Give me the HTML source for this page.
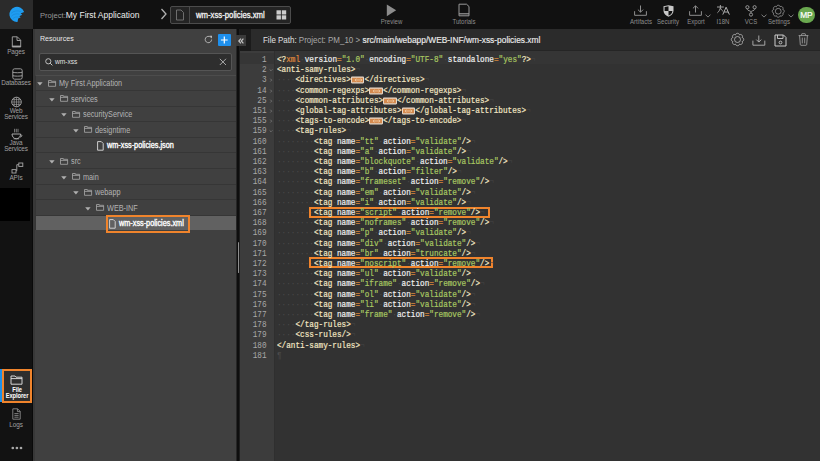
<!DOCTYPE html>
<html><head><meta charset="utf-8">
<style>
*{margin:0;padding:0;box-sizing:border-box}
html,body{width:820px;height:461px;overflow:hidden;background:#111;font-family:"Liberation Sans",sans-serif}
.a{position:absolute}
#top{left:0;top:0;width:820px;height:29px;background:#111}
#logo{left:0;top:0;width:33px;height:29px;background:#2b2b2b}
#side{left:0;top:29px;width:32px;height:432px;background:#121212}
#sideb{left:31.6px;top:29px;width:3px;height:432px;background:#383838;border-left:0.6px solid #0a0a0a}
#res{left:34.5px;top:29px;width:201.5px;height:432px;background:#404040}
#div{left:236px;top:29px;width:4px;height:432px;background:#0e0e0e;border-left:0.8px solid #262626;border-right:0.8px solid #1e1e1e}
#edh{left:251px;top:29px;width:569px;height:22px;background:#2b2b2b;border-bottom:0.8px solid #252525}
#edhd{left:240px;top:29px;width:11px;height:22px;background:#1b1b1b}
#gut{left:240px;top:51px;width:34px;height:410px;background:#3c3c3c}
#code{left:274px;top:51px;width:546px;height:410px;background:#323232;border-left:1px solid #2f2f2f}
.lbl{color:#8e8e8e;font-size:6.5px;text-align:center;white-space:nowrap;transform:scaleX(.93)}
.sl{color:#a0a0a0;font-size:6.4px;text-align:center;line-height:6px;width:32px;left:0;letter-spacing:-0.1px}
.row{left:34px;width:202px;height:15.6px;border-top:1px solid #333}
.tt{font-size:8.4px;color:#b4b4b4;white-space:nowrap;transform:scaleX(.87);transform-origin:0 50%}
.ln{position:absolute;left:240px;width:26.5px;text-align:right;font-family:"Liberation Mono",monospace;font-size:7.7px;color:#a8a8a8;line-height:10.2px;transform:scaleY(1.15)}
.cl{position:absolute;left:277px;font-family:"Liberation Mono",monospace;font-size:7.7px;color:#e6dcc0;line-height:10.2px;white-space:pre;-webkit-text-stroke:0.18px currentColor;transform:scaleY(1.15)}
.t{color:#f2e6c4}
.n{color:#f0f0f0}
.e{color:#d8893a}
.s{color:#a8c862}
.x{color:#e08a3c}
.d{color:#4a4a4a;-webkit-text-stroke:0}
.eol{color:#444;-webkit-text-stroke:0}
.fw{position:absolute;left:268.5px;width:4px;height:10.2px}
.fold{display:inline-block;width:13.4px;height:5.7px;background:#d48a4e;border:0.8px solid #e8d8c8;border-radius:1px;vertical-align:-0.6px;margin:0 0.2px;position:relative}.fold svg{position:absolute;left:1.5px;top:-0.3px}
</style></head><body>
<div id="top" class="a"></div>
<div id="logo" class="a"></div>
<div id="side" class="a"></div>
<div id="sideb" class="a"></div>
<div id="res" class="a"></div>
<div id="div" class="a"></div>
<div id="edhd" class="a"></div>
<div id="edh" class="a"></div>
<div id="gut" class="a"></div>
<div id="code" class="a"></div>

<!-- top bar text -->
<div class="a" style="left:40px;top:9.5px;font-size:7.6px;color:#999;white-space:nowrap">Project:<span style="font-size:8.5px;color:#eee">My First Application</span></div>


<!-- logo -->
<svg class="a" style="left:0;top:0" width="33" height="29" viewBox="0 0 33 29">
<path d="M17.5 21.9 A7.55 7.55 0 1 1 24.1 11.9 L20.6 13.5 L22.3 14.7 L19.3 16.2 L20.7 17.3 L18.2 18.6 Z" fill="#1e9cf0"/>
<path d="M11.2 13.2 C13.5 10.8 17.5 10.2 21.2 11.6 M11.3 16.4 C13.3 14 16.5 13.2 19.6 14.3 M12.6 19 C14.2 17.2 16.2 16.6 18.6 17.2" stroke="#1a84d2" stroke-width="0.6" fill="none"/>
</svg>
<!-- chevron -->
<svg class="a" style="left:160px;top:8px" width="8" height="12" viewBox="0 0 8 12"><path d="M1.5 1 L6 6 L1.5 11" stroke="#b0b0b0" stroke-width="1.3" fill="none"/></svg>
<!-- tab -->
<div class="a" style="left:170px;top:6px;width:121px;height:18px;border:1px solid #4c4c4c;border-radius:2px;background:#242424"></div>
<div class="a" style="left:189px;top:7px;width:1px;height:16px;background:#4a4a4a"></div>
<svg class="a" style="left:175px;top:9px" width="10" height="12" viewBox="0 0 10 12"><path d="M1.5 1 H6 L8.5 3.5 V11 H1.5 Z" stroke="#777" stroke-width="0.9" fill="none"/></svg>
<div class="a" style="left:195.5px;top:9.5px;font-size:8.6px;color:#f4f4f4;-webkit-text-stroke:0.3px #f4f4f4;white-space:nowrap;transform:scaleX(.9);transform-origin:0 50%">wm-xss-policies.xml</div>
<svg class="a" style="left:276px;top:10px" width="11" height="10" viewBox="0 0 11 10"><rect x="0.5" y="0.3" width="4.4" height="4.2" fill="#ccc"/><rect x="5.8" y="0.3" width="4.4" height="4.2" fill="#ccc"/><rect x="0.5" y="5.3" width="4.4" height="4.2" fill="#ccc"/><rect x="5.8" y="5.3" width="4.4" height="4.2" fill="#ccc"/></svg>
<!-- preview -->
<svg class="a" style="left:386px;top:4px" width="11" height="13" viewBox="0 0 11 13"><path d="M0.8 0.5 L10.2 6.3 L0.8 12.2 Z" fill="#8c8c8c"/></svg>
<div class="a lbl" style="left:371px;top:18px;width:41px">Preview</div>
<!-- tutorials -->
<svg class="a" style="left:458px;top:3px" width="12" height="14" viewBox="0 0 12 14"><path d="M1 1.2 H8.5 L11 3.5 V12.8 H1 Z" stroke="#999" stroke-width="1" fill="none"/><path d="M1 10.8 H11" stroke="#999" stroke-width="1.2"/></svg>
<div class="a lbl" style="left:444px;top:18px;width:40px">Tutorials</div>
<!-- artifacts -->
<svg class="a" style="left:634px;top:5px" width="13" height="11" viewBox="0 0 13 11"><path d="M6.5 0.5 V7.2 M3.9 4.6 L6.5 7.2 L9.1 4.6 M0.6 6.2 V10.3 H12.4 V6.2" stroke="#8e8e8e" stroke-width="1" fill="none"/></svg>
<div class="a lbl" style="left:624.5px;top:18px;width:32px">Artifacts</div>
<!-- security -->
<svg class="a" style="left:662.5px;top:4.8px" width="11" height="12" viewBox="0 0 11 12"><path d="M0.5 1.2 L5.5 0.3 L10.5 1.2 V5.8 C10.5 8.8 8 10.8 5.5 11.7 C3 10.8 0.5 8.8 0.5 5.8 Z" fill="#c8c8c8"/><path d="M1.6 2 L5.5 1.3 V6 H1.6 Z M5.5 6 H9.4 C9.2 8.4 7.6 10 5.5 10.6 Z" fill="#111"/></svg>
<div class="a lbl" style="left:653px;top:18px;width:30px">Security</div>
<!-- export -->
<svg class="a" style="left:689px;top:5px" width="13" height="11" viewBox="0 0 13 11"><path d="M6.5 7.5 V0.8 M3.9 3.4 L6.5 0.8 L9.1 3.4 M0.6 6.2 V10.3 H12.4 V6.2" stroke="#8e8e8e" stroke-width="1" fill="none"/></svg>
<svg class="a" style="left:704.5px;top:13.5px" width="6" height="4" viewBox="0 0 6 4"><path d="M0.5 0.6 L3 3.1 L5.5 0.6" stroke="#999" stroke-width="0.8" fill="none"/></svg>
<div class="a lbl" style="left:682.5px;top:18px;width:26px">Export</div>
<!-- i18n -->
<svg class="a" style="left:716px;top:4px" width="15" height="12" viewBox="0 0 15 12"><path d="M1 3 H7.8 M4.4 1 V3 C4.2 5.5 3 7.5 1.4 8.8 M4.4 4 C5 5.6 6 6.6 7.2 7.2" stroke="#b0b0b0" stroke-width="0.9" fill="none"/><path d="M6.8 10.6 L10.1 3.2 L13.4 10.6 M8.2 8 H12" stroke="#b0b0b0" stroke-width="1" fill="none"/></svg>
<div class="a lbl" style="left:713px;top:18px;width:20px">I18N</div>
<!-- vcs -->
<svg class="a" style="left:745px;top:4.5px" width="12" height="12" viewBox="0 0 12 12"><circle cx="2.4" cy="2.2" r="1.6" stroke="#a0a0a0" stroke-width="0.9" fill="none"/><circle cx="9.6" cy="2.2" r="1.6" stroke="#a0a0a0" stroke-width="0.9" fill="none"/><circle cx="6" cy="9.6" r="1.6" stroke="#a0a0a0" stroke-width="0.9" fill="none"/><path d="M2.4 3.8 V4.6 C2.4 5.6 6 5.8 6 6.8 V8 M9.6 3.8 V4.6 C9.6 5.6 6 5.8 6 6.8" stroke="#a0a0a0" stroke-width="0.9" fill="none"/></svg>
<svg class="a" style="left:760.5px;top:13.5px" width="6" height="4" viewBox="0 0 6 4"><path d="M0.5 0.6 L3 3.1 L5.5 0.6" stroke="#999" stroke-width="0.8" fill="none"/></svg>
<div class="a lbl" style="left:739.5px;top:18px;width:22px">VCS</div>
<!-- settings -->
<svg class="a" style="left:772.3px;top:4.6px;overflow:visible" width="12.5" height="12.5" viewBox="0 0 13 13"><path d="M11.12 4.59 C13.26 4.69 13.26 8.31 11.12 8.41 C12.56 10.00 10.00 12.56 8.41 11.12 C8.31 13.26 4.69 13.26 4.59 11.12 C3.00 12.56 0.44 10.00 1.88 8.41 C-0.26 8.31 -0.26 4.69 1.88 4.59 C0.44 3.00 3.00 0.44 4.59 1.88 C4.69 -0.26 8.31 -0.26 8.41 1.88 C10.00 0.44 12.56 3.00 11.12 4.59 Z" stroke="#a0a0a0" stroke-width="0.8" fill="none" stroke-linejoin="round"/><circle cx="6.5" cy="6.5" r="3" stroke="#a0a0a0" stroke-width="0.8" fill="none"/></svg>
<svg class="a" style="left:788px;top:13.5px" width="6" height="4" viewBox="0 0 6 4"><path d="M0.5 0.6 L3 3.1 L5.5 0.6" stroke="#999" stroke-width="0.8" fill="none"/></svg>
<div class="a lbl" style="left:763.5px;top:18px;width:30px">Settings</div>
<!-- avatar -->
<div class="a" style="left:798px;top:6.5px;width:16.5px;height:16.5px;border-radius:50%;background:#6aa84f;color:#fff;font-size:8.4px;line-height:16.5px;text-align:center;letter-spacing:-0.3px;-webkit-text-stroke:0.2px #fff">MP</div>

<!-- sidebar -->
<svg class="a" style="left:11px;top:36px" width="11" height="12" viewBox="0 0 11 12"><path d="M1.3 0.8 H6.3 L9.7 4.2 V11 H1.3 Z M6 0.8 V4.5 H9.7" stroke="#a8a8a8" stroke-width="0.9" fill="none" stroke-linejoin="round"/><path d="M1.3 10.3 H9.7" stroke="#a8a8a8" stroke-width="1.4"/></svg>
<div class="a sl" style="top:48.5px">Pages</div>
<svg class="a" style="left:11.5px;top:68px" width="11" height="12" viewBox="0 0 11 12"><rect x="0.8" y="0.8" width="9.4" height="10.4" rx="1.8" stroke="#a8a8a8" stroke-width="0.9" fill="none"/><path d="M0.8 4.3 C3 4.9 8 4.9 10.2 4.3 M0.8 7.7 C3 8.3 8 8.3 10.2 7.7" stroke="#a8a8a8" stroke-width="0.9" fill="none"/></svg>
<div class="a sl" style="top:80px">Databases</div>
<svg class="a" style="left:10.5px;top:95.5px" width="11" height="12" viewBox="0 0 11 12"><circle cx="5.5" cy="6" r="4.8" stroke="#a8a8a8" stroke-width="0.9" fill="none"/><path d="M0.8 6 H10.2 M5.5 1.2 V10.8 M1.5 3.6 H9.5 M1.5 8.4 H9.5 M3.2 1.8 V10.2 M7.8 1.8 V10.2" stroke="#a8a8a8" stroke-width="0.6" fill="none"/></svg>
<div class="a sl" style="top:108px">Web<br>Services</div>
<svg class="a" style="left:10.5px;top:127.5px" width="12" height="12" viewBox="0 0 12 12"><path d="M1 6 H9.6 C9.6 8.8 7.6 10.8 5.3 10.8 C3 10.8 1 8.8 1 6 Z M9.4 6.6 C11.4 6.6 11.4 9 9 9" stroke="#a8a8a8" stroke-width="1" fill="none"/><path d="M3.6 0.8 V4.4 M5.3 0.8 V4.4 M7 0.8 V4.4" stroke="#a8a8a8" stroke-width="0.7"/><path d="M2.5 10.8 H8.2" stroke="#a8a8a8" stroke-width="0.8"/></svg>
<div class="a sl" style="top:139.5px">Java<br>Services</div>
<svg class="a" style="left:10.5px;top:162px" width="13" height="12" viewBox="0 0 13 12"><rect x="1" y="7.6" width="4" height="3.4" stroke="#a8a8a8" stroke-width="0.9" fill="none"/><rect x="7.8" y="1" width="4" height="3.4" stroke="#a8a8a8" stroke-width="0.9" fill="none"/><path d="M5 8.8 H5.8 V2.7 H7.8" stroke="#a8a8a8" stroke-width="0.9" fill="none"/></svg>
<div class="a sl" style="top:174.5px">APIs</div>
<div class="a" style="left:0;top:187.5px;width:30px;height:33.5px;background:#000"></div>
<!-- file explorer -->
<div class="a" style="left:0;top:368.5px;width:2px;height:33px;background:#1e90e8"></div>
<div class="a" style="left:1.8px;top:368.6px;width:30.6px;height:34px;border:2px solid #f0842c;background:#2e2e2e"></div>
<svg class="a" style="left:10px;top:374.5px" width="13" height="10" viewBox="0 0 13 10"><path d="M1 1 H5 L6 2.2 H12 V9.2 H1 Z M1 3.6 H12" stroke="#e6e6e6" stroke-width="0.9" fill="none"/></svg>
<div class="a sl" style="top:386.5px;color:#fff;font-weight:bold;left:0.5px;transform:scaleX(.9)">File<br>Explorer</div>
<svg class="a" style="left:11.5px;top:407.5px" width="9" height="12" viewBox="0 0 9 12"><path d="M0.8 0.8 H5.6 L8.2 3.4 V11.2 H0.8 Z M5.4 0.8 V3.6 H8.2 M2.4 5.6 H6.6 M2.4 7.4 H6.6 M2.4 9.2 H6.6" stroke="#999" stroke-width="0.8" fill="none"/></svg>
<div class="a sl" style="top:421.5px">Logs</div>
<svg class="a" style="left:10.5px;top:445.5px" width="12" height="4" viewBox="0 0 12 4"><circle cx="1.8" cy="2" r="1.35" fill="#a8a8a8"/><circle cx="5.9" cy="2" r="1.35" fill="#a8a8a8"/><circle cx="10" cy="2" r="1.35" fill="#a8a8a8"/></svg>

<!-- resources header -->
<div class="a" style="left:40px;top:34px;font-size:8px;color:#e8e8e8;white-space:nowrap;transform:scaleX(.88);transform-origin:0 50%">Resources</div>
<svg class="a" style="left:204px;top:35px" width="9" height="9" viewBox="0 0 9 9"><path d="M7.6 4.5 A3.2 3.2 0 1 1 6.6 2.2" stroke="#bbb" stroke-width="0.9" fill="none"/><path d="M5.4 0.8 H8 V3.4 Z" fill="#bbb"/></svg>
<div class="a" style="left:218px;top:33.8px;width:12.6px;height:11.9px;background:#1e90ee;border-radius:1px"></div>
<svg class="a" style="left:218px;top:33.8px" width="12.6" height="12" viewBox="0 0 12.6 12"><path d="M6.3 2.6 V9.4 M2.9 6 H9.7" stroke="#fff" stroke-width="1.2"/></svg>
<div class="a" style="left:39px;top:53px;width:193px;height:18px;border:1px solid #555;border-radius:2px;background:#2e2e2e"></div>
<svg class="a" style="left:45px;top:58px" width="8" height="8" viewBox="0 0 8 8"><circle cx="3.3" cy="3.3" r="2.6" stroke="#ccc" stroke-width="0.9" fill="none"/><path d="M5.2 5.2 L7.4 7.4" stroke="#ccc" stroke-width="1"/></svg>
<div class="a" style="left:55px;top:56.8px;font-size:7.2px;color:#e0e0e0;white-space:nowrap;transform:scaleX(.92);transform-origin:0 50%">wm-xss</div>
<svg class="a" style="left:218.5px;top:58px" width="8" height="8" viewBox="0 0 8 8"><path d="M0.8 0.8 L7 7 M7 0.8 L0.8 7" stroke="#c8c8c8" stroke-width="0.8"/></svg>
<div class="a" style="left:34.5px;top:74.5px;width:201.5px;height:15.6px;background:#404040;border-top:1px solid #4c4c4c;border-left:0.8px solid #353535"></div>
<svg class="a" style="left:37.2px;top:82.1px" width="6" height="4" viewBox="0 0 6 4"><path d="M0.2 0.3 H5.6 L2.9 3.6 Z" fill="#b0b0b0"/></svg>
<svg class="a" style="left:48.0px;top:79.6px" width="9" height="7" viewBox="0 0 9 7"><path d="M0.5 0.5 H3.3 V1.3 H7.6 V6.3 H0.5 Z M0.5 2.4 H7.6" stroke="#aaa" stroke-width="0.8" fill="none"/></svg>
<div class="a tt" style="left:58.6px;top:78.1px">My First Application</div>
<div class="a" style="left:34.5px;top:90.1px;width:201.5px;height:15.6px;background:#404040;border-top:1px solid #363636;border-left:0.8px solid #353535"></div>
<svg class="a" style="left:49.2px;top:97.7px" width="6" height="4" viewBox="0 0 6 4"><path d="M0.2 0.3 H5.6 L2.9 3.6 Z" fill="#b0b0b0"/></svg>
<svg class="a" style="left:60.0px;top:95.2px" width="9" height="7" viewBox="0 0 9 7"><path d="M0.5 0.5 H3.3 V1.3 H7.6 V6.3 H0.5 Z M0.5 2.4 H7.6" stroke="#aaa" stroke-width="0.8" fill="none"/></svg>
<div class="a tt" style="left:70.6px;top:93.7px">services</div>
<div class="a" style="left:34.5px;top:105.7px;width:201.5px;height:15.6px;background:#404040;border-top:1px solid #363636;border-left:0.8px solid #353535"></div>
<svg class="a" style="left:61.2px;top:113.3px" width="6" height="4" viewBox="0 0 6 4"><path d="M0.2 0.3 H5.6 L2.9 3.6 Z" fill="#b0b0b0"/></svg>
<svg class="a" style="left:72.0px;top:110.8px" width="9" height="7" viewBox="0 0 9 7"><path d="M0.5 0.5 H3.3 V1.3 H7.6 V6.3 H0.5 Z M0.5 2.4 H7.6" stroke="#aaa" stroke-width="0.8" fill="none"/></svg>
<div class="a tt" style="left:82.6px;top:109.3px">securityService</div>
<div class="a" style="left:34.5px;top:121.2px;width:201.5px;height:15.6px;background:#404040;border-top:1px solid #363636;border-left:0.8px solid #353535"></div>
<svg class="a" style="left:73.2px;top:128.8px" width="6" height="4" viewBox="0 0 6 4"><path d="M0.2 0.3 H5.6 L2.9 3.6 Z" fill="#b0b0b0"/></svg>
<svg class="a" style="left:84.0px;top:126.3px" width="9" height="7" viewBox="0 0 9 7"><path d="M0.5 0.5 H3.3 V1.3 H7.6 V6.3 H0.5 Z M0.5 2.4 H7.6" stroke="#aaa" stroke-width="0.8" fill="none"/></svg>
<div class="a tt" style="left:94.6px;top:124.8px">designtime</div>
<div class="a" style="left:34.5px;top:136.8px;width:201.5px;height:15.6px;background:#404040;border-top:1px solid #363636;border-left:0.8px solid #353535"></div>
<svg class="a" style="left:96.9px;top:140.9px" width="7" height="10" viewBox="0 0 7 10"><path d="M0.6 0.6 H4.3 L6.2 2.5 V9.2 H0.6 Z" stroke="#ddd" stroke-width="0.9" fill="none"/></svg>
<div class="a tt" style="left:106.6px;top:140.4px;color:#fff;-webkit-text-stroke:0.35px #fff;transform:scaleX(.87)">wm-xss-policies.json</div>
<div class="a" style="left:34.5px;top:152.4px;width:201.5px;height:15.6px;background:#404040;border-top:1px solid #363636;border-left:0.8px solid #353535"></div>
<svg class="a" style="left:49.2px;top:160.0px" width="6" height="4" viewBox="0 0 6 4"><path d="M0.2 0.3 H5.6 L2.9 3.6 Z" fill="#b0b0b0"/></svg>
<svg class="a" style="left:60.0px;top:157.5px" width="9" height="7" viewBox="0 0 9 7"><path d="M0.5 0.5 H3.3 V1.3 H7.6 V6.3 H0.5 Z M0.5 2.4 H7.6" stroke="#aaa" stroke-width="0.8" fill="none"/></svg>
<div class="a tt" style="left:70.6px;top:156.0px">src</div>
<div class="a" style="left:34.5px;top:168.0px;width:201.5px;height:15.6px;background:#404040;border-top:1px solid #363636;border-left:0.8px solid #353535"></div>
<svg class="a" style="left:61.2px;top:175.6px" width="6" height="4" viewBox="0 0 6 4"><path d="M0.2 0.3 H5.6 L2.9 3.6 Z" fill="#b0b0b0"/></svg>
<svg class="a" style="left:72.0px;top:173.1px" width="9" height="7" viewBox="0 0 9 7"><path d="M0.5 0.5 H3.3 V1.3 H7.6 V6.3 H0.5 Z M0.5 2.4 H7.6" stroke="#aaa" stroke-width="0.8" fill="none"/></svg>
<div class="a tt" style="left:82.6px;top:171.6px">main</div>
<div class="a" style="left:34.5px;top:183.6px;width:201.5px;height:15.6px;background:#404040;border-top:1px solid #363636;border-left:0.8px solid #353535"></div>
<svg class="a" style="left:73.2px;top:191.2px" width="6" height="4" viewBox="0 0 6 4"><path d="M0.2 0.3 H5.6 L2.9 3.6 Z" fill="#b0b0b0"/></svg>
<svg class="a" style="left:84.0px;top:188.7px" width="9" height="7" viewBox="0 0 9 7"><path d="M0.5 0.5 H3.3 V1.3 H7.6 V6.3 H0.5 Z M0.5 2.4 H7.6" stroke="#aaa" stroke-width="0.8" fill="none"/></svg>
<div class="a tt" style="left:94.6px;top:187.2px">webapp</div>
<div class="a" style="left:34.5px;top:199.1px;width:201.5px;height:15.6px;background:#404040;border-top:1px solid #363636;border-left:0.8px solid #353535"></div>
<svg class="a" style="left:85.2px;top:206.7px" width="6" height="4" viewBox="0 0 6 4"><path d="M0.2 0.3 H5.6 L2.9 3.6 Z" fill="#b0b0b0"/></svg>
<svg class="a" style="left:96.0px;top:204.2px" width="9" height="7" viewBox="0 0 9 7"><path d="M0.5 0.5 H3.3 V1.3 H7.6 V6.3 H0.5 Z M0.5 2.4 H7.6" stroke="#aaa" stroke-width="0.8" fill="none"/></svg>
<div class="a tt" style="left:106.6px;top:202.7px">WEB-INF</div>
<div class="a" style="left:34.5px;top:214.7px;width:201.5px;height:15.6px;background:#616161;border-top:1px solid #363636;border-left:0.8px solid #353535"></div>
<svg class="a" style="left:108.9px;top:218.8px" width="7" height="10" viewBox="0 0 7 10"><path d="M0.6 0.6 H4.3 L6.2 2.5 V9.2 H0.6 Z" stroke="#ddd" stroke-width="0.9" fill="none"/></svg>
<div class="a tt" style="left:118.6px;top:218.3px;color:#fff;-webkit-text-stroke:0.35px #fff;transform:scaleX(.87)">wm-xss-policies.xml</div>
<div class="a" style="left:106.1px;top:215.2px;width:83.7px;height:17.6px;border:2px solid #f0842c"></div>
<div class="a" style="left:237.7px;top:242px;width:1.6px;height:30.5px;background:#8e8e8e;border-radius:1px"></div>

<!-- editor header -->
<div class="a" style="left:236px;top:34.5px;width:9.5px;height:11.5px;background:#3a3a3a"></div>
<svg class="a" style="left:237.6px;top:37.6px" width="6" height="6" viewBox="0 0 6 6"><path d="M2.9 0.7 L0.8 3 L2.9 5.3 M5.4 0.7 L3.3 3 L5.4 5.3" stroke="#c4c4c4" stroke-width="1.2" fill="none"/></svg>
<div class="a" id="fp1" style="left:263px;top:35px;font-size:8.4px;color:#e0e0e0;white-space:nowrap;transform:scaleX(.95);transform-origin:0 50%">File Path: <span style="color:#a8a8a8">Project: PM_10 &gt;</span></div><div class="a" id="fp2" style="left:362.6px;top:35px;font-size:8.4px;color:#ececec;white-space:nowrap;-webkit-text-stroke:0.15px #ececec;transform-origin:0 50%">src/main/webapp/WEB-INF/wm-xss-policies.xml</div>
<svg class="a" style="left:731.2px;top:32.6px;overflow:visible" width="13" height="13" viewBox="0 0 13 13"><path d="M11.12 4.59 C13.26 4.69 13.26 8.31 11.12 8.41 C12.56 10.00 10.00 12.56 8.41 11.12 C8.31 13.26 4.69 13.26 4.59 11.12 C3.00 12.56 0.44 10.00 1.88 8.41 C-0.26 8.31 -0.26 4.69 1.88 4.59 C0.44 3.00 3.00 0.44 4.59 1.88 C4.69 -0.26 8.31 -0.26 8.41 1.88 C10.00 0.44 12.56 3.00 11.12 4.59 Z" stroke="#bbb" stroke-width="0.8" fill="none" stroke-linejoin="round"/><circle cx="6.5" cy="6.5" r="3" stroke="#bbb" stroke-width="0.8" fill="none"/></svg>
<svg class="a" style="left:752px;top:34.5px" width="14" height="11" viewBox="0 0 14 11"><path d="M6.8 0.5 V7 M4.3 4.6 L6.8 7.1 L9.3 4.6 M0.9 5.6 V10.2 H12.8 V5.6" stroke="#b4b4b4" stroke-width="0.9" fill="none" stroke-linejoin="round"/></svg>
<svg class="a" style="left:773.5px;top:33.5px" width="13" height="13" viewBox="0 0 13 13"><path d="M1 1 H9.5 L12 3.5 V12 H1 Z" stroke="#ccc" stroke-width="1" fill="none"/><path d="M3.5 1 V4.5 H9 V1" stroke="#ccc" stroke-width="0.9" fill="none"/><circle cx="6.5" cy="8.5" r="1.4" stroke="#ccc" stroke-width="0.9" fill="none"/></svg>
<svg class="a" style="left:797.5px;top:33px" width="11" height="13" viewBox="0 0 11 13"><path d="M0.6 2.6 H10.4 M3.6 2.6 V1.2 C3.6 0.9 3.8 0.7 4.1 0.7 H6.9 C7.2 0.7 7.4 0.9 7.4 1.2 V2.6 M1.6 2.6 L2.3 11.6 C2.35 12 2.6 12.3 3 12.3 H8 C8.4 12.3 8.65 12 8.7 11.6 L9.4 2.6 M4.3 4.6 V10.4 M6.7 4.6 V10.4" stroke="#aaa" stroke-width="0.8" fill="none"/></svg>
<!-- code highlight boxes -->
<div class="a" style="left:308.5px;top:207.2px;width:181.3px;height:11.3px;border:2px solid #f0842c"></div>
<div class="a" style="left:308.5px;top:256.7px;width:184.5px;height:11.7px;border:2px solid #f0842c"></div>
<!-- active line -->
<div class="a" style="left:240px;top:51px;width:34px;height:2px;background:#3c3c3c"></div>
<div class="a" style="left:240px;top:53px;width:34px;height:10.7px;background:#363636"></div>
<div class="a" style="left:275px;top:51px;width:545px;height:12.7px;background:#353535"></div>
<div class="ln" style="top:55.00px">1</div>
<div class="cl" style="top:55.00px"><span class="t">&lt;?</span><span class="x">xml</span><span class="d">·</span><span class="n">version</span><span class="e">=</span><span class="s">"1.0"</span><span class="d">·</span><span class="n">encoding</span><span class="e">=</span><span class="s">"UTF-8"</span><span class="d">·</span><span class="n">standalone</span><span class="e">=</span><span class="s">"yes"</span><span class="t">?&gt;</span><span class="eol">¬</span></div>
<div class="ln" style="top:65.20px">2</div>
<svg class="fw" style="top:65.20px" viewBox="0 0 4 10.2"><path d="M0.6 4.4 L2 5.8 L3.4 4.4" stroke="#858585" stroke-width="0.7" fill="none"/></svg>
<div class="cl" style="top:65.20px"><span class="t">&lt;anti-samy-rules&gt;</span><span class="eol">¬</span></div>
<div class="ln" style="top:75.40px">3</div>
<svg class="fw" style="top:75.40px" viewBox="0 0 4 10.2"><path d="M1.3 3.7 L2.7 5.1 L1.3 6.5" stroke="#858585" stroke-width="0.7" fill="none"/></svg>
<div class="cl" style="top:75.40px"><span class="d">····</span><span class="t">&lt;directives&gt;</span><span class="fold"><svg width="9" height="4" viewBox="0 0 9 4"><path d="M1 2 H8 M2.4 0.8 L1 2 L2.4 3.2 M6.6 0.8 L8 2 L6.6 3.2" stroke="#f0cfa8" stroke-width="0.7" fill="none"/></svg></span><span class="t">&lt;/directives&gt;</span><span class="eol">¬</span></div>
<div class="ln" style="top:85.60px">14</div>
<svg class="fw" style="top:85.60px" viewBox="0 0 4 10.2"><path d="M1.3 3.7 L2.7 5.1 L1.3 6.5" stroke="#858585" stroke-width="0.7" fill="none"/></svg>
<div class="cl" style="top:85.60px"><span class="d">····</span><span class="t">&lt;common-regexps&gt;</span><span class="fold"><svg width="9" height="4" viewBox="0 0 9 4"><path d="M1 2 H8 M2.4 0.8 L1 2 L2.4 3.2 M6.6 0.8 L8 2 L6.6 3.2" stroke="#f0cfa8" stroke-width="0.7" fill="none"/></svg></span><span class="t">&lt;/common-regexps&gt;</span><span class="eol">¬</span></div>
<div class="ln" style="top:95.80px">25</div>
<svg class="fw" style="top:95.80px" viewBox="0 0 4 10.2"><path d="M1.3 3.7 L2.7 5.1 L1.3 6.5" stroke="#858585" stroke-width="0.7" fill="none"/></svg>
<div class="cl" style="top:95.80px"><span class="d">····</span><span class="t">&lt;common-attributes&gt;</span><span class="fold"><svg width="9" height="4" viewBox="0 0 9 4"><path d="M1 2 H8 M2.4 0.8 L1 2 L2.4 3.2 M6.6 0.8 L8 2 L6.6 3.2" stroke="#f0cfa8" stroke-width="0.7" fill="none"/></svg></span><span class="t">&lt;/common-attributes&gt;</span><span class="eol">¬</span></div>
<div class="ln" style="top:106.00px">151</div>
<svg class="fw" style="top:106.00px" viewBox="0 0 4 10.2"><path d="M1.3 3.7 L2.7 5.1 L1.3 6.5" stroke="#858585" stroke-width="0.7" fill="none"/></svg>
<div class="cl" style="top:106.00px"><span class="d">····</span><span class="t">&lt;global-tag-attributes&gt;</span><span class="fold"><svg width="9" height="4" viewBox="0 0 9 4"><path d="M1 2 H8 M2.4 0.8 L1 2 L2.4 3.2 M6.6 0.8 L8 2 L6.6 3.2" stroke="#f0cfa8" stroke-width="0.7" fill="none"/></svg></span><span class="t">&lt;/global-tag-attributes&gt;</span><span class="eol">¬</span></div>
<div class="ln" style="top:116.20px">155</div>
<svg class="fw" style="top:116.20px" viewBox="0 0 4 10.2"><path d="M1.3 3.7 L2.7 5.1 L1.3 6.5" stroke="#858585" stroke-width="0.7" fill="none"/></svg>
<div class="cl" style="top:116.20px"><span class="d">····</span><span class="t">&lt;tags-to-encode&gt;</span><span class="fold"><svg width="9" height="4" viewBox="0 0 9 4"><path d="M1 2 H8 M2.4 0.8 L1 2 L2.4 3.2 M6.6 0.8 L8 2 L6.6 3.2" stroke="#f0cfa8" stroke-width="0.7" fill="none"/></svg></span><span class="t">&lt;/tags-to-encode&gt;</span><span class="eol">¬</span></div>
<div class="ln" style="top:126.40px">159</div>
<svg class="fw" style="top:126.40px" viewBox="0 0 4 10.2"><path d="M0.6 4.4 L2 5.8 L3.4 4.4" stroke="#858585" stroke-width="0.7" fill="none"/></svg>
<div class="cl" style="top:126.40px"><span class="d">····</span><span class="t">&lt;tag-rules&gt;</span><span class="eol">¬</span></div>
<div class="ln" style="top:136.60px">160</div>
<div class="cl" style="top:136.60px"><span class="d">········</span><span class="t">&lt;tag</span><span class="d">·</span><span class="n">name</span><span class="e">=</span><span class="s">"tt"</span><span class="d">·</span><span class="n">action</span><span class="e">=</span><span class="s">"validate"</span><span class="t">/&gt;</span><span class="eol">¬</span></div>
<div class="ln" style="top:146.80px">161</div>
<div class="cl" style="top:146.80px"><span class="d">········</span><span class="t">&lt;tag</span><span class="d">·</span><span class="n">name</span><span class="e">=</span><span class="s">"a"</span><span class="d">·</span><span class="n">action</span><span class="e">=</span><span class="s">"validate"</span><span class="t">/&gt;</span><span class="eol">¬</span></div>
<div class="ln" style="top:157.00px">162</div>
<div class="cl" style="top:157.00px"><span class="d">········</span><span class="t">&lt;tag</span><span class="d">·</span><span class="n">name</span><span class="e">=</span><span class="s">"blockquote"</span><span class="d">·</span><span class="n">action</span><span class="e">=</span><span class="s">"validate"</span><span class="t">/&gt;</span><span class="eol">¬</span></div>
<div class="ln" style="top:167.20px">163</div>
<div class="cl" style="top:167.20px"><span class="d">········</span><span class="t">&lt;tag</span><span class="d">·</span><span class="n">name</span><span class="e">=</span><span class="s">"b"</span><span class="d">·</span><span class="n">action</span><span class="e">=</span><span class="s">"filter"</span><span class="t">/&gt;</span><span class="eol">¬</span></div>
<div class="ln" style="top:177.40px">164</div>
<div class="cl" style="top:177.40px"><span class="d">········</span><span class="t">&lt;tag</span><span class="d">·</span><span class="n">name</span><span class="e">=</span><span class="s">"frameset"</span><span class="d">·</span><span class="n">action</span><span class="e">=</span><span class="s">"remove"</span><span class="t">/&gt;</span><span class="eol">¬</span></div>
<div class="ln" style="top:187.60px">165</div>
<div class="cl" style="top:187.60px"><span class="d">········</span><span class="t">&lt;tag</span><span class="d">·</span><span class="n">name</span><span class="e">=</span><span class="s">"em"</span><span class="d">·</span><span class="n">action</span><span class="e">=</span><span class="s">"validate"</span><span class="t">/&gt;</span><span class="eol">¬</span></div>
<div class="ln" style="top:197.80px">166</div>
<div class="cl" style="top:197.80px"><span class="d">········</span><span class="t">&lt;tag</span><span class="d">·</span><span class="n">name</span><span class="e">=</span><span class="s">"i"</span><span class="d">·</span><span class="n">action</span><span class="e">=</span><span class="s">"validate"</span><span class="t">/&gt;</span><span class="eol">¬</span></div>
<div class="ln" style="top:208.00px">167</div>
<div class="cl" style="top:208.00px"><span class="d">········</span><span class="t">&lt;tag</span><span class="d">·</span><span class="n">name</span><span class="e">=</span><span class="s">"script"</span><span class="d">·</span><span class="n">action</span><span class="e">=</span><span class="s">"remove"</span><span class="t">/&gt;</span><span class="eol">¬</span></div>
<div class="ln" style="top:218.20px">168</div>
<div class="cl" style="top:218.20px"><span class="d">········</span><span class="t">&lt;tag</span><span class="d">·</span><span class="n">name</span><span class="e">=</span><span class="s">"noframes"</span><span class="d">·</span><span class="n">action</span><span class="e">=</span><span class="s">"remove"</span><span class="t">/&gt;</span><span class="eol">¬</span></div>
<div class="ln" style="top:228.40px">169</div>
<div class="cl" style="top:228.40px"><span class="d">········</span><span class="t">&lt;tag</span><span class="d">·</span><span class="n">name</span><span class="e">=</span><span class="s">"p"</span><span class="d">·</span><span class="n">action</span><span class="e">=</span><span class="s">"validate"</span><span class="t">/&gt;</span><span class="eol">¬</span></div>
<div class="ln" style="top:238.60px">170</div>
<div class="cl" style="top:238.60px"><span class="d">········</span><span class="t">&lt;tag</span><span class="d">·</span><span class="n">name</span><span class="e">=</span><span class="s">"div"</span><span class="d">·</span><span class="n">action</span><span class="e">=</span><span class="s">"validate"</span><span class="t">/&gt;</span><span class="eol">¬</span></div>
<div class="ln" style="top:248.80px">171</div>
<div class="cl" style="top:248.80px"><span class="d">········</span><span class="t">&lt;tag</span><span class="d">·</span><span class="n">name</span><span class="e">=</span><span class="s">"br"</span><span class="d">·</span><span class="n">action</span><span class="e">=</span><span class="s">"truncate"</span><span class="t">/&gt;</span><span class="eol">¬</span></div>
<div class="ln" style="top:259.00px">172</div>
<div class="cl" style="top:259.00px"><span class="d">········</span><span class="t">&lt;tag</span><span class="d">·</span><span class="n">name</span><span class="e">=</span><span class="s">"noscript"</span><span class="d">·</span><span class="n">action</span><span class="e">=</span><span class="s">"remove"</span><span class="t">/&gt;</span><span class="eol">¬</span></div>
<div class="ln" style="top:269.20px">173</div>
<div class="cl" style="top:269.20px"><span class="d">········</span><span class="t">&lt;tag</span><span class="d">·</span><span class="n">name</span><span class="e">=</span><span class="s">"ul"</span><span class="d">·</span><span class="n">action</span><span class="e">=</span><span class="s">"validate"</span><span class="t">/&gt;</span><span class="eol">¬</span></div>
<div class="ln" style="top:279.40px">174</div>
<div class="cl" style="top:279.40px"><span class="d">········</span><span class="t">&lt;tag</span><span class="d">·</span><span class="n">name</span><span class="e">=</span><span class="s">"iframe"</span><span class="d">·</span><span class="n">action</span><span class="e">=</span><span class="s">"remove"</span><span class="t">/&gt;</span><span class="eol">¬</span></div>
<div class="ln" style="top:289.60px">175</div>
<div class="cl" style="top:289.60px"><span class="d">········</span><span class="t">&lt;tag</span><span class="d">·</span><span class="n">name</span><span class="e">=</span><span class="s">"ol"</span><span class="d">·</span><span class="n">action</span><span class="e">=</span><span class="s">"validate"</span><span class="t">/&gt;</span><span class="eol">¬</span></div>
<div class="ln" style="top:299.80px">176</div>
<div class="cl" style="top:299.80px"><span class="d">········</span><span class="t">&lt;tag</span><span class="d">·</span><span class="n">name</span><span class="e">=</span><span class="s">"li"</span><span class="d">·</span><span class="n">action</span><span class="e">=</span><span class="s">"validate"</span><span class="t">/&gt;</span><span class="eol">¬</span></div>
<div class="ln" style="top:310.00px">177</div>
<div class="cl" style="top:310.00px"><span class="d">········</span><span class="t">&lt;tag</span><span class="d">·</span><span class="n">name</span><span class="e">=</span><span class="s">"frame"</span><span class="d">·</span><span class="n">action</span><span class="e">=</span><span class="s">"remove"</span><span class="t">/&gt;</span><span class="eol">¬</span></div>
<div class="ln" style="top:320.20px">178</div>
<div class="cl" style="top:320.20px"><span class="d">····</span><span class="t">&lt;/tag-rules&gt;</span><span class="eol">¬</span></div>
<div class="ln" style="top:330.40px">179</div>
<div class="cl" style="top:330.40px"><span class="d">····</span><span class="t">&lt;css-rules/&gt;</span><span class="eol">¬</span></div>
<div class="ln" style="top:340.60px">180</div>
<div class="cl" style="top:340.60px"><span class="t">&lt;/anti-samy-rules&gt;</span><span class="eol">¬</span></div>
<div class="ln" style="top:350.80px">181</div>
<div class="cl" style="top:350.80px"><span class="d">¶</span></div>
</body></html>
